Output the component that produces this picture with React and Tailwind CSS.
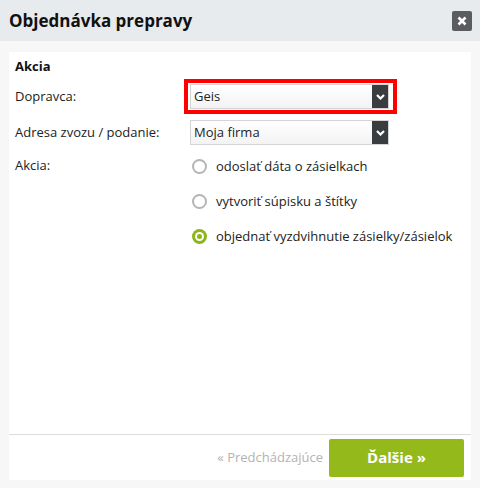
import React from 'react';

const font = { fontFamily: '"Open Sans", "Liberation Sans", sans-serif' };

function Select({ value }) {
  return (
    <div className="flex h-[25px] w-[199px] border border-[#d4d4d4] bg-gradient-to-b from-white to-[#f3f3f3]">
      <span className="flex-1 pl-[3px] text-[13px] leading-[23px] text-[#222]">{value}</span>
      <span className="flex w-[16px] items-center justify-center bg-[#3a3d40]">
        <svg width="9" height="6" viewBox="0 0 9 6">
          <path d="M1 1 L4.5 4.5 L8 1" stroke="white" strokeWidth="2.2" fill="none" />
        </svg>
      </span>
    </div>
  );
}

function Radio({ checked, label }) {
  return (
    <div className="flex h-[35px] items-center gap-[9px]">
      {checked ? (
        <span className="h-[15px] w-[15px] rounded-full bg-[#8db51c] flex items-center justify-center">
          <span className="h-[9px] w-[9px] rounded-full bg-white flex items-center justify-center">
            <span className="h-[5px] w-[5px] rounded-full bg-[#8db51c]" />
          </span>
        </span>
      ) : (
        <span className="h-[15px] w-[15px] rounded-full border-2 border-[#b5b5b5] bg-white" />
      )}
      <span className="text-[13px] text-[#222]">{label}</span>
    </div>
  );
}

export default function App() {
  return (
    <div style={font} className="flex h-[488px] w-[480px] flex-col bg-[#f7f7f7]">
      <div className="flex h-[41px] items-center justify-between bg-[#e8ebee] pl-[9px] pr-[8px]">
        <h1 className="text-[17px] font-bold text-[#111]">Objednávka prepravy</h1>
        <button className="flex h-[20px] w-[20px] items-center justify-center rounded-[2px] bg-[#5a5c5f]">
          <svg width="10" height="10" viewBox="0 0 10 10">
            <path d="M1.5 1.5 L8.5 8.5 M8.5 1.5 L1.5 8.5" stroke="white" strokeWidth="2.6" />
          </svg>
        </button>
      </div>

      <div className="mx-[9px] mt-[11px] mb-[8px] flex flex-1 flex-col bg-white">
        <div className="flex-1 px-[6px] pt-[5px]">
          <div className="text-[13px] font-bold leading-[18px] text-[#111]">Akcia</div>

          <div className="mt-[4px] flex items-center">
            <span className="w-[169px] text-[13px] text-[#222]">Dopravca:</span>
            <div className="border-[4px] border-[#ff0000] py-[1px] pl-[2px] pr-[4px]">
              <Select value="Geis" />
            </div>
          </div>

          <div className="mt-[6px] flex items-center">
            <span className="w-[175px] text-[13px] text-[#222]">Adresa zvozu / podanie:</span>
            <Select value="Moja firma" />
          </div>

          <div className="mt-[4px] flex">
            <span className="w-[177px] pt-[7px] text-[13px] text-[#222]">Akcia:</span>
            <div className="flex flex-col">
              <Radio label="odoslať dáta o zásielkach" />
              <Radio label="vytvoriť súpisku a štítky" />
              <Radio checked label="objednať vyzdvihnutie zásielky/zásielok" />
            </div>
          </div>
        </div>

        <div className="flex h-[46px] items-center justify-end gap-[6px] border-t border-[#dcdcdc] pr-[7px]">
          <span className="text-[13px] text-[#b3b3b3]">« Predchádzajúce</span>
          <button className="h-[38px] w-[135px] rounded-[2px] bg-[#94b91b] text-[15px] font-bold text-white">
            Ďalšie »
          </button>
        </div>
      </div>
    </div>
  );
}
